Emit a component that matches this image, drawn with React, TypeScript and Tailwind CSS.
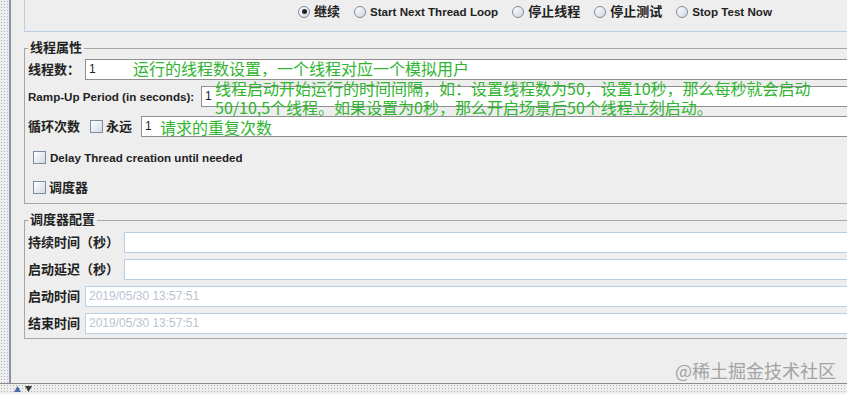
import React from "react";

const ui = "font-['Liberation_Sans','Noto_Sans_CJK_SC',sans-serif]";

function Radio({ checked = false }: { checked?: boolean }) {
  return (
    <span className="flex h-[12px] w-[12px] shrink-0 items-center justify-center rounded-full border border-[#7d8b9c] bg-[linear-gradient(135deg,#ffffff,#cfd8e3)]">
      {checked ? <span className="h-[5px] w-[5px] rounded-full bg-[#222]" /> : null}
    </span>
  );
}

function Check() {
  return (
    <span className="h-[13px] w-[13px] shrink-0 border border-[#7d8b9c] bg-[linear-gradient(135deg,#ffffff,#d3dbe5)]" />
  );
}

function Field({ value, hint, soft }: { value?: string; hint?: string; soft?: boolean }) {
  return (
    <div
      className={
        soft
          ? "h-[21px] flex-1 border border-[#b8cfe5] bg-white pl-[3px] text-[12px] leading-[19px]"
          : "h-[21px] flex-1 border border-[#8f8f8f] bg-white pl-[3px] text-[12px] leading-[19px] text-[#222]"
      }
    >
      {value}
      {hint ? <span className="text-[#b9c3d0]">{hint}</span> : null}
    </div>
  );
}

const radios = [
  { label: "继续", checked: true, cjk: true },
  { label: "Start Next Thread Loop", checked: false, cjk: false },
  { label: "停止线程", checked: false, cjk: true },
  { label: "停止测试", checked: false, cjk: true },
  { label: "Stop Test Now", checked: false, cjk: false },
];

export default function App() {
  return (
    <div className={`relative flex h-[394px] w-[847px] flex-col overflow-hidden bg-[#eeeeee] text-[#222] ${ui}`}>
      <div className="flex h-[383px]">
        <div className="w-[9px] shrink-0 bg-[radial-gradient(circle,#b4b4b4_0.7px,transparent_1px)] bg-[length:3px_3px]" />
        <div className="w-[2px] shrink-0 bg-[#8593ab]" />

        <div className="w-[880px] shrink-0 pl-[13px]">
          {/* loop action */}
          <div className="flex h-[32px] items-start border-b border-l border-[#b8cfe5] pl-[273px] pt-[5px]">
            {radios.map((r) => (
              <div key={r.label} className="mr-[14px] flex h-[13px] items-center gap-[4px]">
                <Radio checked={r.checked} />
                <span className={r.cjk ? "text-[13px] font-bold" : "text-[11.6px] font-bold"}>{r.label}</span>
              </div>
            ))}
          </div>

          {/* thread properties */}
          <fieldset className="mt-[8px] h-[164px] border border-[#a6a6a6] px-[3px]">
            <legend className="px-[2px] text-[13px] font-bold leading-[16px]">线程属性</legend>
            <div className="mt-[3px] flex h-[21px] items-center">
              <span className="w-[57px] shrink-0 text-[13px] font-bold">线程数：</span>
              <Field value="1" />
            </div>
            <div className="mt-[6px] flex h-[21px] items-center">
              <span className="w-[173px] shrink-0 text-[11.6px] font-bold">Ramp-Up Period (in seconds):</span>
              <Field value="1" />
            </div>
            <div className="mt-[9px] flex h-[21px] items-center">
              <div className="flex w-[113px] shrink-0 items-center">
                <span className="w-[62px] text-[13px] font-bold">循环次数</span>
                <Check />
                <span className="ml-[3px] text-[13px] font-bold">永远</span>
              </div>
              <Field value="1" />
            </div>
            <div className="mt-[14px] flex h-[13px] items-center gap-[4px] pl-[5px]">
              <Check />
              <span className="text-[11.6px] font-bold">Delay Thread creation until needed</span>
            </div>
            <div className="mt-[17px] flex h-[13px] items-center gap-[3px] pl-[5px]">
              <Check />
              <span className="text-[13px] font-bold">调度器</span>
            </div>
          </fieldset>

          {/* scheduler */}
          <fieldset className="mt-[8px] h-[127px] border border-[#a6a6a6] px-[3px]">
            <legend className="px-[2px] text-[13px] font-bold leading-[16px]">调度器配置</legend>
            <div className="mt-[4px] flex h-[21px] items-center">
              <span className="w-[96px] shrink-0 text-[13px] font-bold">持续时间（秒）</span>
              <Field soft />
            </div>
            <div className="mt-[6px] flex h-[21px] items-center">
              <span className="w-[96px] shrink-0 text-[13px] font-bold">启动延迟（秒）</span>
              <Field soft />
            </div>
            <div className="mt-[6px] flex h-[21px] items-center">
              <span className="w-[57px] shrink-0 text-[13px] font-bold">启动时间</span>
              <Field soft hint="2019/05/30 13:57:51" />
            </div>
            <div className="mt-[6px] flex h-[21px] items-center">
              <span className="w-[57px] shrink-0 text-[13px] font-bold">结束时间</span>
              <Field soft hint="2019/05/30 13:57:51" />
            </div>
          </fieldset>
        </div>
      </div>

      {/* bottom split bar */}
      <div className="flex h-[11px] items-center gap-[4px] border-t border-[#8c8c8c] bg-[radial-gradient(circle,#b4b4b4_0.7px,transparent_1px)] bg-[length:3px_3px] pl-[14px]">
        <svg width="7" height="6" viewBox="0 0 7 6">
          <path d="M3.5 0 L7 6 L0 6 Z" fill="#4a6ea9" />
        </svg>
        <svg width="7" height="6" viewBox="0 0 7 6">
          <path d="M0 0 L7 0 L3.5 6 Z" fill="#3a3a3a" />
        </svg>
      </div>

      {/* annotations */}
      <div className="absolute left-[133px] top-[59px] whitespace-nowrap font-['Noto_Sans_CJK_SC',sans-serif] text-[16px] leading-[18px] text-[#2fb52f]">
        运行的线程数设置，一个线程对应一个模拟用户
      </div>
      <div className="absolute left-[215px] top-[79px] whitespace-nowrap font-['Noto_Sans_CJK_SC',sans-serif] text-[16px] leading-[19px] text-[#2fb52f]">
        <div>线程启动开始运行的时间间隔，如：设置线程数为50，设置10秒，那么每秒就会启动</div>
        <div>50/10,5个线程。如果设置为0秒，那么开启场景后50个线程立刻启动。</div>
      </div>
      <div className="absolute left-[160px] top-[118px] whitespace-nowrap font-['Noto_Sans_CJK_SC',sans-serif] text-[16px] leading-[18px] text-[#2fb52f]">
        请求的重复次数
      </div>
      <div className="absolute left-[675px] top-[359px] whitespace-nowrap font-['Noto_Sans_CJK_SC',sans-serif] text-[18px] leading-[22px] text-[#a3a3a3]">
        @稀土掘金技术社区
      </div>
    </div>
  );
}
